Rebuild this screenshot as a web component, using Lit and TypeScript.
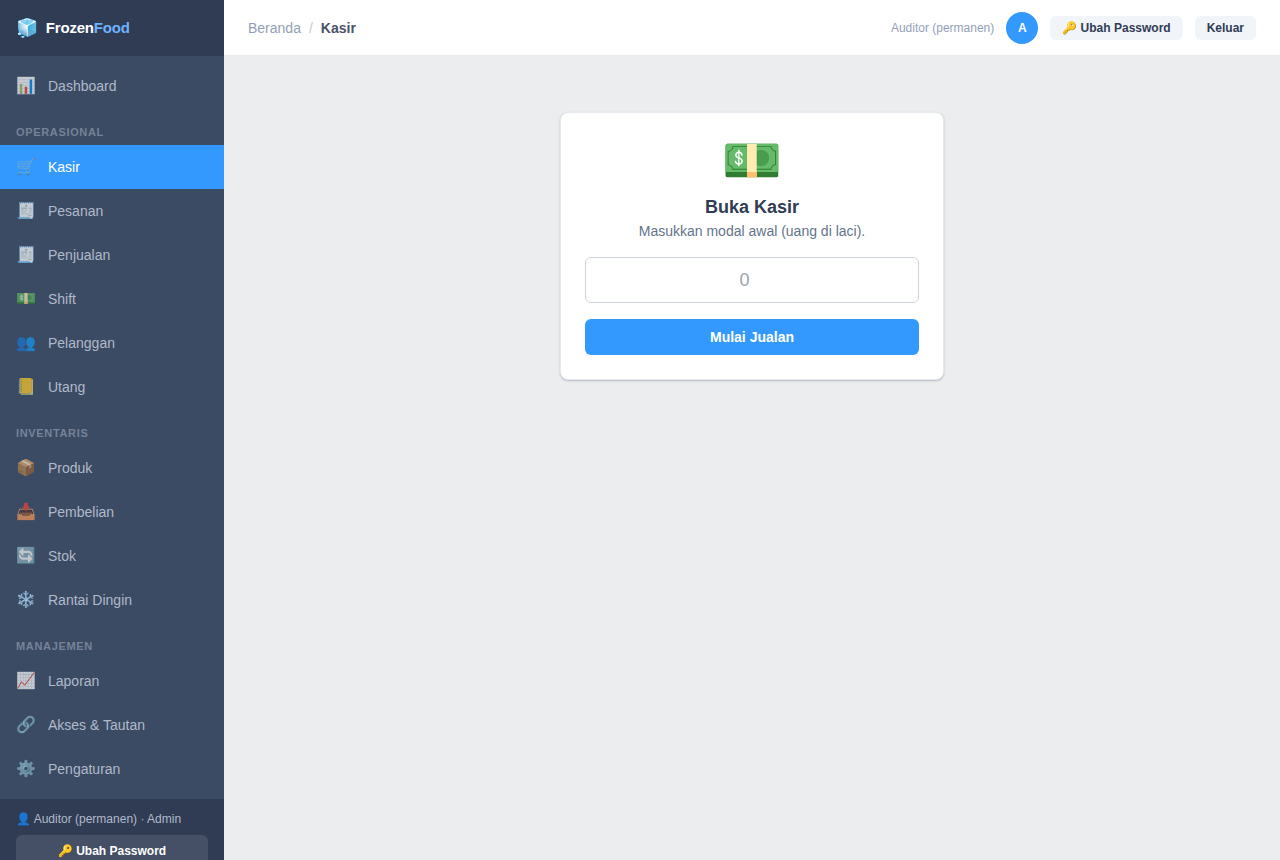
import { LitElement, html, css } from "lit";
import { customElement, property } from "lit/decorators.js";

interface NavItem {
  icon: string;
  label: string;
}

interface NavGroup {
  title?: string;
  items: NavItem[];
}

const GROUPS: NavGroup[] = [
  { items: [{ icon: "📊", label: "Dashboard" }] },
  {
    title: "Operasional",
    items: [
      { icon: "🛒", label: "Kasir" },
      { icon: "🧾", label: "Pesanan" },
      { icon: "🧾", label: "Penjualan" },
      { icon: "💵", label: "Shift" },
      { icon: "👥", label: "Pelanggan" },
      { icon: "📒", label: "Utang" },
    ],
  },
  {
    title: "Inventaris",
    items: [
      { icon: "📦", label: "Produk" },
      { icon: "📥", label: "Pembelian" },
      { icon: "🔄", label: "Stok" },
      { icon: "❄️", label: "Rantai Dingin" },
    ],
  },
  {
    title: "Manajemen",
    items: [
      { icon: "📈", label: "Laporan" },
      { icon: "🔗", label: "Akses & Tautan" },
      { icon: "⚙️", label: "Pengaturan" },
    ],
  },
];

@customElement("app-sidebar")
export class AppSidebar extends LitElement {
  @property() active = "";

  static styles = css`
    :host {
      display: flex;
      flex-direction: column;
      box-sizing: border-box;
      height: 100vh;
      overflow-y: auto;
      scrollbar-width: none;
      background: #3c4b64;
      color: #fff;
    }
    .brand {
      display: flex;
      flex: none;
      align-items: center;
      gap: 8px;
      height: 56px;
      padding: 0 16px;
      background: #303c54;
      font-size: 15px;
      font-weight: 700;
      letter-spacing: -0.2px;
    }
    .brand-icon {
      font-size: 18px;
    }
    .brand-accent {
      color: #6cb2ff;
    }
    .nav {
      flex: 1 0 auto;
      padding: 8px 0;
    }
    .title {
      margin: 0;
      padding: 16px 16px 4px;
      font-size: 11px;
      font-weight: 700;
      line-height: 17px;
      letter-spacing: 0.06em;
      text-transform: uppercase;
      color: #768298;
    }
    .item {
      display: flex;
      align-items: center;
      gap: 12px;
      height: 44px;
      padding: 0 16px;
      color: #b0b9c9;
      text-decoration: none;
    }
    .item.active {
      background: #39f;
      color: #fff;
    }
    .item-icon {
      width: 20px;
      font-size: 16px;
      text-align: center;
      opacity: 0.7;
    }
    .footer {
      flex: none;
      padding: 12px 16px;
      background: #303c54;
      font-size: 12px;
      line-height: 16px;
    }
    .user {
      margin-bottom: 8px;
      color: #b0b9c9;
    }
    .password {
      display: block;
      width: 100%;
      height: 32px;
      border: 0;
      border-radius: 6px;
      background: rgba(255, 255, 255, 0.1);
      color: #fff;
      font: inherit;
      font-weight: 700;
      cursor: pointer;
    }
  `;

  render() {
    return html`
      <div class="brand">
        <span class="brand-icon">🧊</span>
        <span>Frozen<span class="brand-accent">Food</span></span>
      </div>
      <nav class="nav">
        ${GROUPS.map(
          (group) => html`
            ${group.title ? html`<h2 class="title">${group.title}</h2>` : null}
            ${group.items.map(
              (item) => html`
                <a class="item ${item.label === this.active ? "active" : ""}" href="#">
                  <span class="item-icon">${item.icon}</span>
                  <span>${item.label}</span>
                </a>
              `,
            )}
          `,
        )}
      </nav>
      <div class="footer">
        <div class="user">👤 Auditor (permanen) · Admin</div>
        <button class="password" type="button">🔑 Ubah Password</button>
      </div>
    `;
  }
}

@customElement("app-topbar")
export class AppTopbar extends LitElement {
  static styles = css`
    :host {
      display: flex;
      align-items: center;
      justify-content: space-between;
      box-sizing: border-box;
      height: 56px;
      padding: 0 24px;
      background: #fff;
      border-bottom: 1px solid #e8eaed;
    }
    .crumbs {
      display: flex;
      gap: 8px;
    }
    .crumb {
      color: #94a0b8;
      text-decoration: none;
    }
    .separator {
      color: #c4c9d0;
    }
    .current {
      font-weight: 700;
      color: #4a5268;
    }
    .account {
      display: flex;
      align-items: center;
      gap: 12px;
      font-size: 12px;
    }
    .name {
      color: #94a0b8;
    }
    .avatar {
      display: grid;
      place-items: center;
      width: 32px;
      height: 32px;
      border-radius: 50%;
      background: #39f;
      color: #fff;
      font-weight: 700;
    }
    .action {
      height: 24px;
      padding: 0 12px;
      border: 0;
      border-radius: 6px;
      background: #f1f4f9;
      color: #303c54;
      font: inherit;
      font-weight: 700;
      cursor: pointer;
    }
  `;

  render() {
    return html`
      <nav class="crumbs" aria-label="Breadcrumb">
        <a class="crumb" href="#">Beranda</a>
        <span class="separator">/</span>
        <span class="current">Kasir</span>
      </nav>
      <div class="account">
        <span class="name">Auditor (permanen)</span>
        <span class="avatar">A</span>
        <button class="action" type="button">🔑 Ubah Password</button>
        <button class="action" type="button">Keluar</button>
      </div>
    `;
  }
}

@customElement("open-register")
export class OpenRegister extends LitElement {
  static styles = css`
    :host {
      display: block;
      width: 100%;
      max-width: 384px;
    }
    .card {
      display: flex;
      flex-direction: column;
      padding: 24px;
      border: 1px solid #e6e9ed;
      border-radius: 8px;
      background: #fff;
      box-shadow: 0 1px 2px rgba(60, 75, 100, 0.3);
      text-align: center;
    }
    .icon {
      font-size: 48px;
      line-height: 48px;
    }
    .heading {
      margin: 8px 0 0;
      font-size: 18px;
      line-height: 28px;
      color: #303c54;
    }
    .hint {
      margin: 0 0 16px;
      color: #64748b;
    }
    .amount {
      box-sizing: border-box;
      width: 100%;
      height: 46px;
      margin: 0 0 16px;
      padding: 8px 12px;
      border: 1px solid #d0d5dd;
      border-radius: 6px;
      background: #fff;
      font: inherit;
      font-size: 18px;
      text-align: center;
    }
    .amount::placeholder {
      color: #9ca3af;
    }
    .submit {
      height: 36px;
      border: 0;
      border-radius: 6px;
      background: #39f;
      color: #fff;
      font: inherit;
      font-weight: 700;
      cursor: pointer;
    }
  `;

  render() {
    return html`
      <form class="card" @submit=${(e: Event) => e.preventDefault()}>
        <div class="icon">💵</div>
        <h1 class="heading">Buka Kasir</h1>
        <label class="hint" for="amount">Masukkan modal awal (uang di laci).</label>
        <input class="amount" id="amount" type="number" placeholder="0" />
        <button class="submit" type="submit">Mulai Jualan</button>
      </form>
    `;
  }
}

@customElement("app-root")
export class AppRoot extends LitElement {
  static styles = css`
    :host {
      display: grid;
      grid-template-columns: 224px minmax(0, 1fr);
      height: 100vh;
      background: #ebedef;
      font-family: "Liberation Sans", Arial, sans-serif;
      font-size: 14px;
      line-height: 20px;
    }
    .page {
      display: flex;
      flex-direction: column;
    }
    .content {
      display: flex;
      justify-content: center;
      padding: 56px 24px 24px;
    }
  `;

  render() {
    return html`
      <app-sidebar active="Kasir"></app-sidebar>
      <div class="page">
        <app-topbar></app-topbar>
        <main class="content">
          <open-register></open-register>
        </main>
      </div>
    `;
  }
}
